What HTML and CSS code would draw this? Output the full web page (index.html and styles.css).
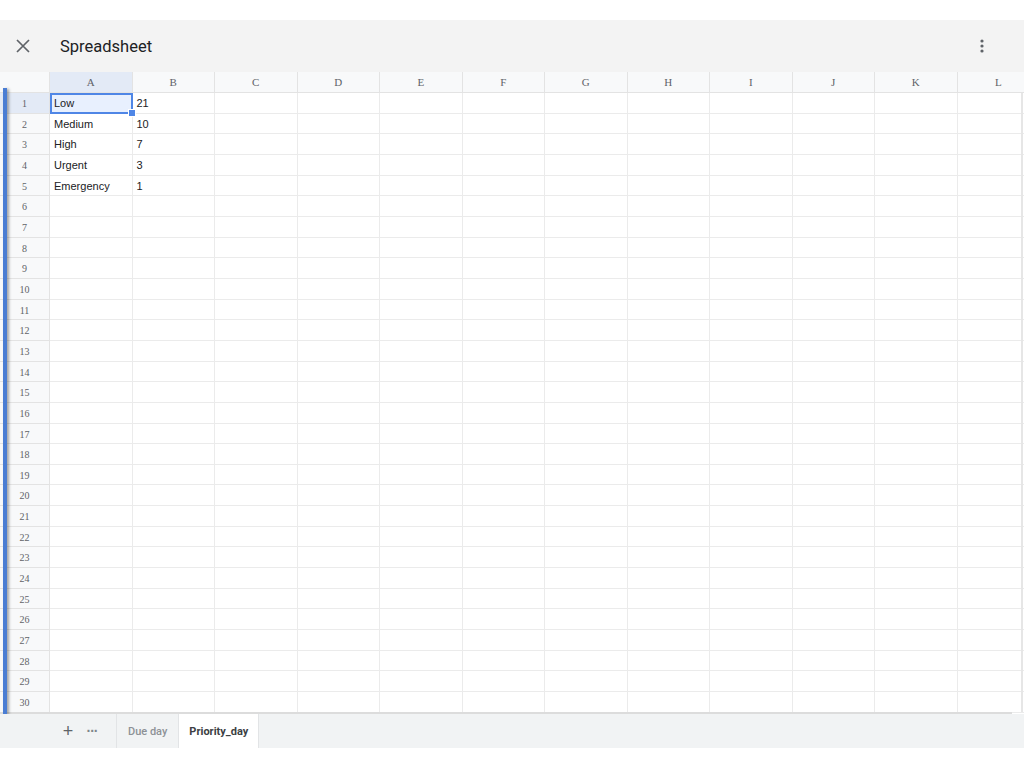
FILE: index.html
```html
<!DOCTYPE html>
<html lang="en">
<head>
    <meta charset="UTF-8">
    <meta name="viewport" content="width=device-width, initial-scale=1.0">
    <title>Spreadsheet</title>
    <link rel="stylesheet" href="styles.css">
</head>
<body>
    <div class="app">
        <div class="topbar">
            <button class="icon-btn close-btn" aria-label="Close">
                <svg width="14" height="14" viewBox="0 0 14 14"><path d="M1 1 L13 13 M13 1 L1 13" stroke="#5f6368" stroke-width="1.7" fill="none"/></svg>
            </button>
            <h1 class="title">Spreadsheet</h1>
            <button class="icon-btn menu-btn" aria-label="More">
                <svg width="4" height="14" viewBox="0 0 4 14"><circle cx="2" cy="2" r="1.6" fill="#5f6368"/><circle cx="2" cy="7" r="1.6" fill="#5f6368"/><circle cx="2" cy="12" r="1.6" fill="#5f6368"/></svg>
            </button>
        </div>

        <div class="sheet">
            <div class="grid" id="grid"></div>
            <div class="side-bar"></div>
            <div class="vscroll"></div>
            <div class="hscroll"></div>
        </div>

        <div class="tabs">
            <button class="tab-tool plus">+</button>
            <button class="tab-tool dots">&middot;&middot;&middot;</button>
            <div class="tab">Due day</div>
            <div class="tab active">Priority_day</div>
        </div>
    </div>

    <script src="script.js"></script>
</body>
</html>
```

FILE: styles.css
```css
* { margin: 0; padding: 0; box-sizing: border-box; }
body {
    font-family: Roboto, 'Liberation Sans', Arial, sans-serif;
    background: #fff;
    color: #202124;
}
.app {
    margin-top: 20px;
}
.topbar {
    height: 52px;
    background: #f3f3f3;
    display: flex;
    align-items: center;
    padding: 0 39px 0 16px;
}
.icon-btn {
    border: none;
    background: none;
    display: flex;
    align-items: center;
    justify-content: center;
}
.close-btn {
    width: 14px;
    height: 14px;
}
.title {
    font-size: 16.5px;
    font-weight: 400;
    margin-left: 30px;
    color: #202124;
    flex: 1;
}
.menu-btn {
    width: 6px;
    height: 14px;
}
.sheet {
    position: relative;
    overflow: hidden;
    height: 642px;
}
.grid {
    display: grid;
    grid-template-columns: 50px repeat(12, 82.5px);
    grid-template-rows: 21px repeat(30, 20.67px);
    width: 1040px;
}
.cell {
    border-right: 1px solid #ebebeb;
    border-bottom: 1px solid #ebebeb;
    font-family: 'Liberation Sans', Arial, sans-serif;
    font-size: 11px;
    line-height: 20px;
    padding-left: 4px;
    white-space: nowrap;
    overflow: visible;
    position: relative;
}
.col-head, .row-head, .corner {
    background: #f8f9fa;
    font-family: 'Liberation Serif', 'Times New Roman', serif;
    color: #5f6368;
    text-align: center;
    padding-left: 0;
    border-color: #e3e3e3;
}
.col-head {
    font-size: 11px;
    line-height: 21px;
}
.row-head {
    font-size: 10px;
    line-height: 21px;
}
.col-head.sel, .row-head.sel {
    background: #e3eaf6;
}
.cell.active {
    background: #e8f0fe;
    outline: 2px solid #4f86e6;
    outline-offset: -2px;
    z-index: 2;
}
.handle {
    position: absolute;
    right: -4px;
    bottom: -4px;
    width: 6px;
    height: 6px;
    background: #4f86e6;
    border: 1px solid #fff;
    box-sizing: content-box;
}
.side-bar {
    position: absolute;
    left: 3px;
    top: 16px;
    width: 4px;
    height: 626px;
    background: #4a7dd3;
    box-shadow: 2px 1px 3px rgba(0,0,0,0.35);
    z-index: 3;
}
.vscroll {
    position: absolute;
    right: 1px;
    top: 21px;
    width: 2px;
    height: 619px;
    background: #e6e6e6;
}
.hscroll {
    position: absolute;
    left: 0;
    bottom: 0;
    width: 1012px;
    height: 2px;
    background: #dcdcdc;
}
.tabs {
    height: 34px;
    background: #f1f3f4;
    display: flex;
    align-items: stretch;
    padding-left: 58px;
}
.tab-tool {
    border: none;
    background: none;
    color: #5f6368;
    font-family: 'Liberation Sans', Arial, sans-serif;
    width: 20px;
    margin-right: 4px;
}
.plus {
    font-size: 18px;
    font-weight: 300;
}
.dots {
    font-size: 14px;
    font-weight: 700;
    letter-spacing: -1px;
    color: #80868b;
    margin-right: 14px;
}
.tab {
    font-size: 11px;
    font-weight: 500;
    color: #8d9196;
    padding: 0 11px;
    display: flex;
    align-items: center;
    border-left: 1px solid #e2e4e6;
}
.tab.active {
    background: #fff;
    color: #3c4043;
    font-weight: 700;
    padding: 0 10px;
    border-right: 1px solid #e2e4e6;
}
```

FILE: script.js
```js
const cols = ['A', 'B', 'C', 'D', 'E', 'F', 'G', 'H', 'I', 'J', 'K', 'L'];
const data = [
    ['Low', '21'],
    ['Medium', '10'],
    ['High', '7'],
    ['Urgent', '3'],
    ['Emergency', '1']
];

const grid = document.getElementById('grid');

function addCell(cls, text) {
    const el = document.createElement('div');
    el.className = 'cell ' + cls;
    el.textContent = text || '';
    grid.appendChild(el);
    return el;
}

// header row
addCell('corner');
cols.forEach((c, i) => addCell('col-head' + (i === 0 ? ' sel' : ''), c));

// body rows
for (let r = 1; r <= 30; r++) {
    addCell('row-head' + (r === 1 ? ' sel' : ''), r);
    cols.forEach((c, i) => {
        const row = data[r - 1];
        const val = row && i < 2 ? row[i] : '';
        const cell = addCell('', val);
        if (r === 1 && i === 0) {
            cell.classList.add('active');
            const h = document.createElement('span');
            h.className = 'handle';
            cell.appendChild(h);
        }
    });
}
```
